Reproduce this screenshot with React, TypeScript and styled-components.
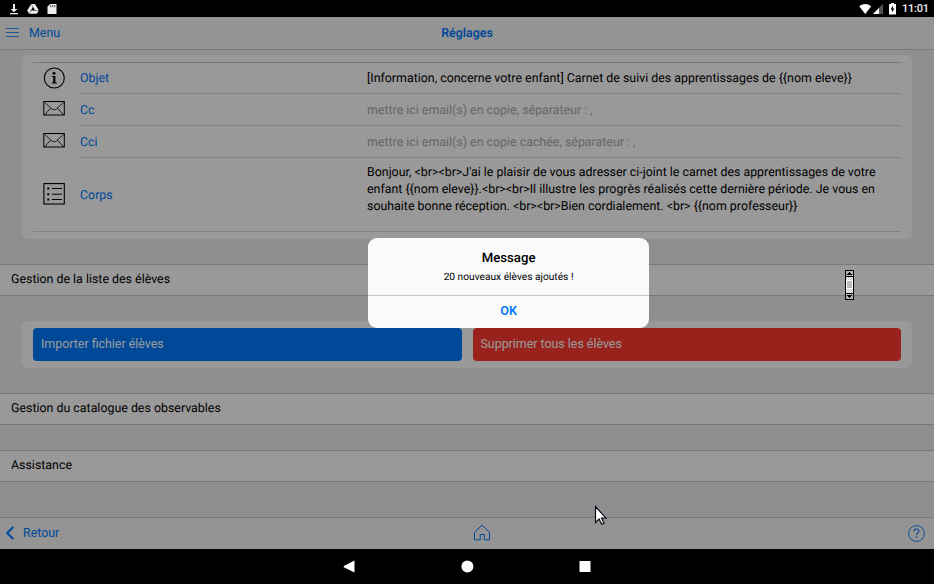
import React from 'react';
import styled, { createGlobalStyle } from 'styled-components';

const GlobalStyle = createGlobalStyle`
  * { box-sizing: border-box; }
  body {
    margin: 0;
    background: #000;
    font-family: Roboto, "Liberation Sans", sans-serif;
    font-size: 12.4px;
    color: #000;
    overflow: hidden;
    text-rendering: geometricPrecision;
  }
  button { font: inherit; letter-spacing: inherit; border: 0; padding: 0; background: none; }
  svg { display: block; flex: none; }
`;

const Screen = styled.div`
  position: relative;
  width: 934px;
  height: 584px;
  display: flex;
  flex-direction: column;
  overflow: hidden;
`;

const StatusBar = styled.div`
  height: 17px;
  flex: none;
  display: flex;
  align-items: center;
  justify-content: space-between;
  padding: 0 6px 0 9px;
  background: #000;
  color: #f2f2f2;
`;

const StatusGroup = styled.div<{ $gap: number }>`
  display: flex;
  align-items: center;
  gap: ${(p) => p.$gap}px;
`;

const Clock = styled.span`
  width: 26px;
  margin-left: 6px;
  padding-top: 1px;
  font-size: 11px;
  font-weight: 500;
  line-height: 16px;
  letter-spacing: -0.2px;
  white-space: nowrap;
`;

const AppView = styled.div`
  position: relative;
  height: 532px;
  flex: none;
  display: flex;
  flex-direction: column;
  background: #efeff4;
`;

const Bar = styled.div<{ $edge: 'top' | 'bottom' }>`
  height: ${(p) => (p.$edge === 'bottom' ? 33 : 32)}px;
  flex: none;
  display: grid;
  grid-template-columns: 1fr auto 1fr;
  align-items: center;
  padding: 0 6px ${(p) => (p.$edge === 'bottom' ? 1 : 2)}px;
  background: #f7f7f8;
  color: #007aff;
  border-${(p) => p.$edge}: 1px solid #cbcbcf;
`;

const BarLink = styled.button<{ $gap: number }>`
  justify-self: start;
  display: flex;
  align-items: center;
  gap: ${(p) => p.$gap}px;
  line-height: 15px;
  color: #007aff;
`;

const BarTitle = styled.h1`
  margin: 0;
  padding-top: 1px;
  font-size: 12.4px;
  line-height: 15px;
  font-weight: 600;
`;

const HomeButton = styled.button`
  margin: 0 0 1px 30px;
`;

const HelpButton = styled.button`
  justify-self: end;
  margin-right: 3px;
  padding-top: 1px;
`;

const Content = styled.main`
  flex: 1;
  display: flex;
  flex-direction: column;
  padding-top: 5px;
`;

const Card = styled.section<{ $height: number }>`
  flex: none;
  height: ${(p) => p.$height}px;
  margin: 0 22px;
  padding: 7px 11px;
  border-radius: 6px;
  background: #fff;
`;

const FieldList = styled.div`
  border-top: 1px solid #c8c7cc;
`;

const FieldRow = styled.div<{ $height: number }>`
  display: flex;
  height: ${(p) => p.$height}px;
`;

const FieldIcon = styled.div<{ $shift: number }>`
  width: 47px;
  display: flex;
  align-items: center;
  padding-left: 10px;
  padding-bottom: ${(p) => p.$shift}px;
`;

const FieldBody = styled.div<{ $last?: boolean; $drop?: number }>`
  flex: 1;
  display: grid;
  grid-template-columns: 287px 1fr;
  align-items: center;
  padding-top: ${(p) => p.$drop ?? 0}px;
  border-bottom: 1px solid ${(p) => (p.$last ? 'transparent' : '#dbdbde')};
`;

const LastRule = styled.div`
  height: 1px;
  background: #dbdbde;
`;

const Label = styled.label`
  line-height: 17px;
  color: #007aff;
`;

const Value = styled.div<{ $muted?: boolean; $lift?: number }>`
  line-height: 17px;
  white-space: pre;
  color: ${(p) => (p.$muted ? '#a9a9a9' : '#000')};
  padding-bottom: ${(p) => p.$lift ?? 0}px;
`;

const SectionRow = styled.div<{ $gap: number }>`
  flex: none;
  height: 32px;
  margin-top: ${(p) => p.$gap}px;
  padding: 0 11px 1px;
  display: flex;
  align-items: center;
  background: #fff;
  border-top: 1px solid #c8c7cc;
  border-bottom: 1px solid #c8c7cc;
`;

const ButtonCard = styled(Card)`
  display: grid;
  grid-template-columns: 1fr 1fr;
  gap: 11px;
  margin-top: 25px;
`;

const ActionButton = styled.button<{ $color: string }>`
  height: 33px;
  padding: 0 8px 2px;
  text-align: left;
  color: #fff;
  background: ${(p) => p.$color};
  border-radius: 4px;
`;

const Backdrop = styled.div`
  position: absolute;
  inset: 0;
  background: rgba(0, 0, 0, 0.4);
`;

const Dialog = styled.div`
  position: absolute;
  left: 368.4px;
  top: 221px;
  width: 280.4px;
  height: 90px;
  display: flex;
  flex-direction: column;
  border-radius: 9px;
  background: #fafafa;
  text-align: center;
  overflow: hidden;
`;

const DialogText = styled.div`
  height: 58px;
  padding-top: 12px;
  border-bottom: 1px solid #c7c7c7;
`;

const DialogTitle = styled.h2`
  margin: 0;
  font-size: 13.2px;
  line-height: 18px;
  font-weight: 500;
`;

const DialogMessage = styled.p`
  margin: 2px 0 0;
  font-size: 10.2px;
  line-height: 15px;
`;

const DialogButton = styled.button`
  flex: 1;
  padding-bottom: 3px;
  font-size: 12.6px;
  font-weight: 600;
  color: #007aff;
`;

const ScrollCursor = styled.svg`
  position: absolute;
  left: 845px;
  top: 270px;
`;

const Pointer = styled.svg`
  position: absolute;
  left: 594px;
  top: 505px;
`;

const NavBar = styled.nav`
  height: 35px;
  flex: none;
  display: flex;
  justify-content: center;
  align-items: center;
  gap: 105px;
  background: #000;
`;

const MailIcon = () => (
  <svg width="22" height="15" viewBox="0 0 22 15" fill="none" stroke="#000" strokeWidth="1">
    <rect x=".8" y=".5" width="20.5" height="13.5" />
    <path d="M1.300 1l7.500 7q2.300 2 4.600 0L21 1M1.300 14l6.500-6.800M20.900 14l-6.500-6.800" strokeWidth=".8" />
  </svg>
);

const InfoIcon = () => (
  <svg width="22" height="22" viewBox="0 0 22 22">
    <circle cx="11.300" cy="11" r="10" fill="none" stroke="#000" strokeWidth="1.1" />
    <circle cx="11" cy="6.300" r="1.500" />
    <path d="M8.700 9h3.700v6.300l1.500.4v.8H8.700v-.8l1.500-.4V10l-1.500-.300z" />
  </svg>
);

const ListIcon = () => (
  <svg width="22" height="22" viewBox="0 0 22 22" fill="none" stroke="#000">
    <rect x=".9" y=".6" width="20.400" height="20.400" strokeWidth="1.100" />
    <path d="M8.900 5.500h10M8.900 11.200h10M8.900 16.500h10" />
    <path d="M4.300 5.500h2M4.300 11.200h2M4.300 16.500h2" strokeWidth="2" />
  </svg>
);

export default function App() {
  return (
    <Screen>
      <GlobalStyle />
      <StatusBar>
        <StatusGroup $gap={8}>
          <svg width="10" height="12" viewBox="0 0 10 12" fill="#eee">
            <path d="M4 1h2v5h2.300L5 9.300 1.700 6H4zM1 10h8v1.200H1z" />
          </svg>
          <svg width="12" height="12" viewBox="0 0 12 12" fill="#eee">
            <path d="M4.200 1h3.700l3.900 6.200-1.900 3.600H2.100L.2 7.500zM5.900 4L4 7.300h4z" fillRule="evenodd" />
            <path d="M4.200 1.300L8 7.600M3.600 7.500h8M2 10.800l2.100-3.400" stroke="#333" strokeWidth=".5" />
          </svg>
          <svg width="10" height="12" viewBox="0 0 10 12" fill="#eee">
            <path d="M3.200 1H9q.5 0 .5.500v9q0 .5-.5.500H1q-.5 0-.5-.5v-7z" />
            <path d="M3.700 2.200v2M5.700 2.200v2M7.700 2.200v2" stroke="#111" strokeWidth=".8" />
          </svg>
        </StatusGroup>
        <StatusGroup $gap={0}>
          <svg width="30" height="12" viewBox="0 0 30 12">
            <path d="M.2 3.200Q6.200-1.200 12.200 3.200L6.200 11z" fill="#fff" />
            <path d="M24 .8V11H14z" fill="#555" />
            <path d="M20 5V11h-6z" fill="#fff" />
          </svg>
          <svg width="7" height="12" viewBox="0 0 7 12">
            <path d="M0 1h2V0h3v1h2v10.500H0z" fill="#fff" />
            <path d="M4 2.500L1.600 6.500h1.500v3l2.300-4H3.900z" fill="#000" />
          </svg>
          <Clock>11:01</Clock>
        </StatusGroup>
      </StatusBar>

      <AppView>
        <Bar $edge="bottom">
          <BarLink $gap={10}>
            <svg width="13" height="9" viewBox="0 0 13 9" stroke="#007aff" strokeWidth=".8">
              <path d="M0 .5h13M0 4.500h13M0 8.500h13" />
            </svg>
            Menu
          </BarLink>
          <BarTitle>Réglages</BarTitle>
        </Bar>

        <Content>
          <Card $height={184}>
            <FieldList>
              <FieldRow $height={31}>
                <FieldIcon $shift={1}><InfoIcon /></FieldIcon>
                <FieldBody $drop={1}>
                  <Label>Objet</Label>
                  <Value>{'[Information, concerne votre enfant] Carnet de suivi des apprentissages de {{nom eleve}}'}</Value>
                </FieldBody>
              </FieldRow>
              <FieldRow $height={32}>
                <FieldIcon $shift={3}><MailIcon /></FieldIcon>
                <FieldBody $drop={2}>
                  <Label>Cc</Label>
                  <Value $muted>mettre ici email(s) en copie, séparateur : ,</Value>
                </FieldBody>
              </FieldRow>
              <FieldRow $height={32}>
                <FieldIcon $shift={3}><MailIcon /></FieldIcon>
                <FieldBody $drop={2}>
                  <Label>Cci</Label>
                  <Value $muted>mettre ici email(s) en copie cachée, séparateur : ,</Value>
                </FieldBody>
              </FieldRow>
              <FieldRow $height={73}>
                <FieldIcon $shift={1}><ListIcon /></FieldIcon>
                <FieldBody $last $drop={2}>
                  <Label>Corps</Label>
                  <Value $lift={11}>
                    {"Bonjour, <br><br>J'ai le plaisir de vous adresser ci-joint le carnet des apprentissages de votre\nenfant {{nom eleve}}.<br><br>Il illustre les progrès réalisés cette dernière période. Je vous en\nsouhaite bonne réception. <br><br>Bien cordialement. <br> {{nom professeur}}"}
                  </Value>
                </FieldBody>
              </FieldRow>
              <LastRule />
            </FieldList>
          </Card>

          <SectionRow $gap={25}>Gestion de la liste des élèves</SectionRow>

          <ButtonCard $height={47}>
            <ActionButton $color="#007aff">Importer fichier élèves</ActionButton>
            <ActionButton $color="#ff3b30">Supprimer tous les élèves</ActionButton>
          </ButtonCard>

          <SectionRow $gap={25}>Gestion du catalogue des observables</SectionRow>
          <SectionRow $gap={25}>Assistance</SectionRow>
        </Content>

        <Bar $edge="top">
          <BarLink $gap={9}>
            <svg width="8" height="14" viewBox="0 0 8 14" fill="none" stroke="#007aff" strokeWidth="2">
              <path d="M7.200 1L1.200 7l6 6" />
            </svg>
            Retour
          </BarLink>
          <HomeButton aria-label="Accueil">
            <svg width="18" height="17" viewBox="0 0 18 17" fill="none" stroke="#007aff">
              <path d="M1.500 8.300L9 1.200l7.500 7.100v7.500h-5.200v-5.300H7.200v5.300H1.500z" />
            </svg>
          </HomeButton>
          <HelpButton aria-label="Aide">
            <svg width="17" height="17" viewBox="0 0 17 17" fill="none" stroke="#007aff">
              <circle cx="8.500" cy="8.500" r="7.900" strokeWidth=".9" />
              <path d="M6.100 6.500q0-2.500 2.400-2.500t2.400 2.200q0 1.100-1.200 1.800t-1.200 2" strokeWidth="1.100" />
              <path d="M8.500 11.300v1.300" strokeWidth="1.300" />
            </svg>
          </HelpButton>
        </Bar>

        <Backdrop />
        <Dialog role="dialog">
          <DialogText>
            <DialogTitle>Message</DialogTitle>
            <DialogMessage>20 nouveaux élèves ajoutés !</DialogMessage>
          </DialogText>
          <DialogButton>OK</DialogButton>
        </Dialog>
      </AppView>

      <NavBar>
        <svg width="13" height="13" viewBox="0 0 13 13" fill="#fff"><path d="M11.500 .5v12L.7 7.200V6z" /></svg>
        <svg width="13" height="13" viewBox="0 0 13 13" fill="#fff"><circle cx="6.400" cy="6.500" r="6" /></svg>
        <svg width="13" height="13" viewBox="0 0 13 13" fill="#fff"><rect x=".5" y="1" width="11" height="11" rx=".5" /></svg>
      </NavBar>

      <ScrollCursor width="9" height="30" viewBox="0 0 9 30" shapeRendering="crispEdges">
        <defs>
          <pattern id="checker" width="2" height="2" patternUnits="userSpaceOnUse">
            <rect width="2" height="2" fill="#fff" />
            <rect width="1" height="1" fill="#bbb" />
            <rect x="1" y="1" width="1" height="1" fill="#bbb" />
          </pattern>
        </defs>
        <rect width="9" height="30" fill="#000" />
        <rect x="1" y="1" width="7" height="5" fill="#b5b5b5" />
        <rect x="1" y="7" width="7" height="16" fill="url(#checker)" />
        <rect x="1" y="10" width="7" height="9" fill="#fff" />
        <rect x="2" y="11" width="5" height="7" fill="#bdbdbd" />
        <rect x="1" y="24" width="7" height="5" fill="#b5b5b5" />
        <path d="M4 2h1v1h1v1h1v1H2V4h1V3h1zM2 25h5v1H6v1H5v1H4v-1H3v-1H2z" />
      </ScrollCursor>
      <Pointer width="14" height="21" viewBox="0 0 14 21">
        <path d="M1.500 1.500v16l3.600-3.400 2.600 5.200 2.300-1.100-2.500-5H12z" fill="#fff" stroke="#0a0a14" strokeWidth="1.200" />
      </Pointer>
    </Screen>
  );
}
